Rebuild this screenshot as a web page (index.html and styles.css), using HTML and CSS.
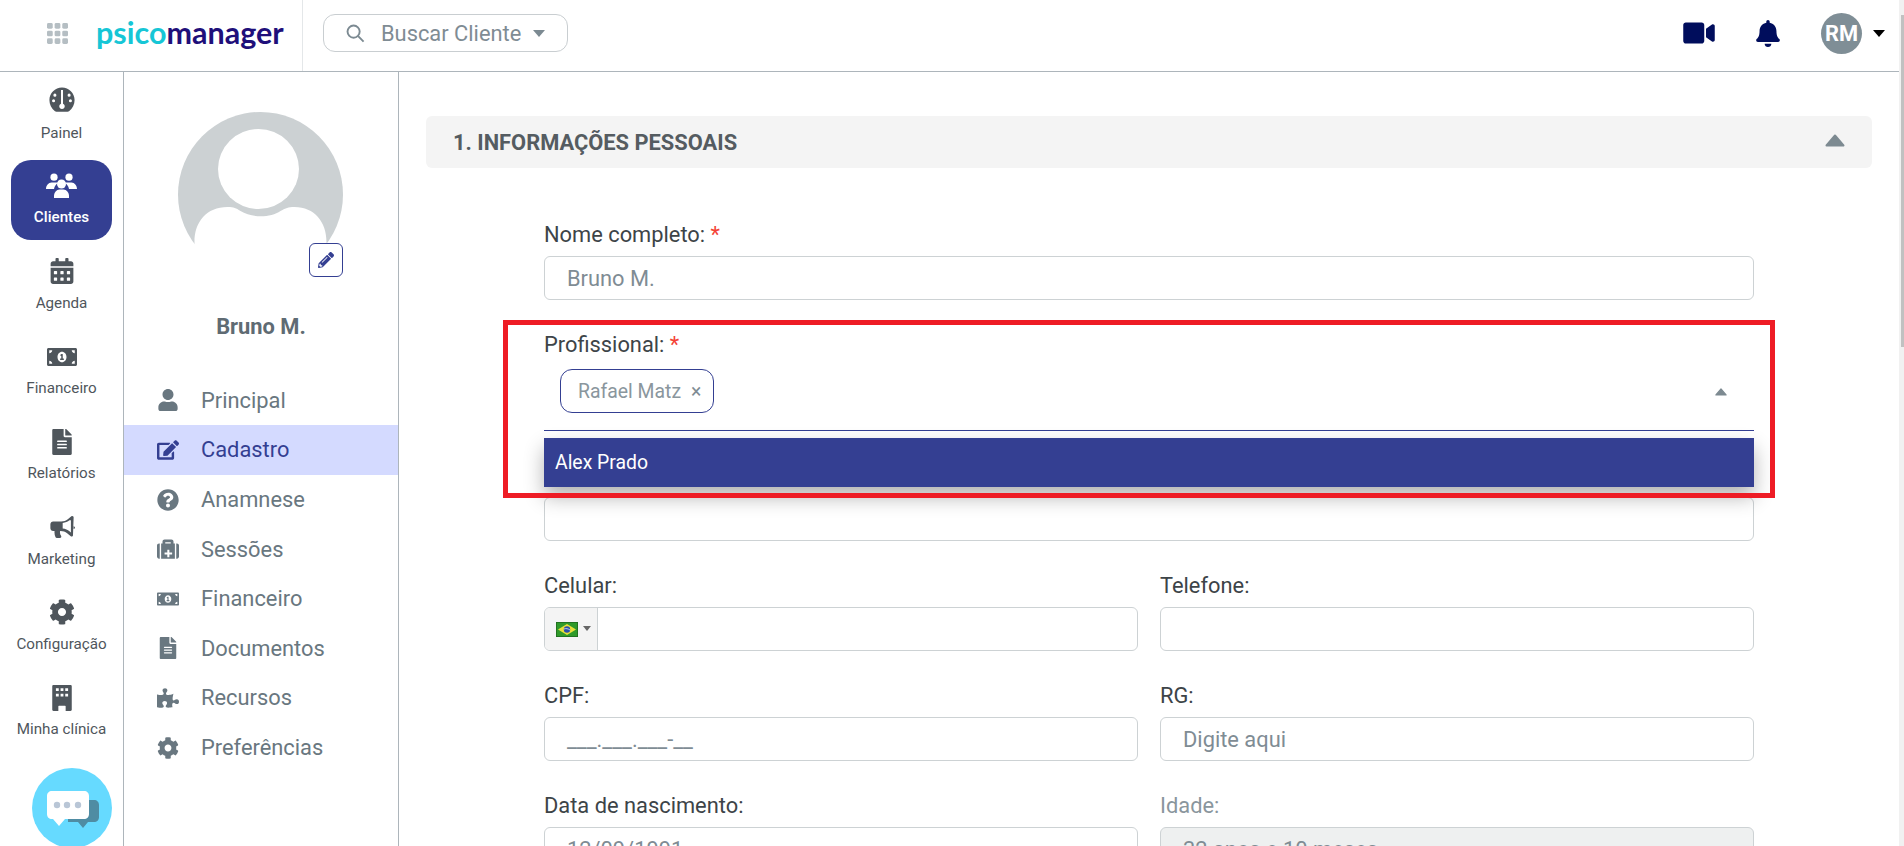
FILE: index.html
```html
<!DOCTYPE html>
<html lang="pt-BR">
<head>
<meta charset="utf-8">
<title>PsicoManager</title>
<link rel="stylesheet" href="styles.css">
</head>
<body>
<svg class="defs" width="0" height="0" aria-hidden="true">
  <symbol id="i-users" viewBox="0 0 31 25"><circle cx="8" cy="4.2" r="3.6"/><circle cx="23" cy="4.2" r="3.6"/><circle cx="15.5" cy="11" r="4.5"/><path d="M0 16c0-3.5 2.500-6.500 5.500-6.500h5c1 0 1.500.2 1.500.5-2 1.200-3.500 3.200-4 6z"/><path d="M31 16c0-3.500-2.500-6.500-5.500-6.500h-5c-1 0-1.500.2-1.500.5 2 1.200 3.500 3.200 4 6z"/><path d="M8 25v-2c0-3.500 2.500-6.500 5.500-6.500h4c3 0 5.500 3 5.500 6.500v2z"/></symbol>
  <symbol id="i-gauge" viewBox="0 0 512 512"><path fill-rule="evenodd" d="M256 8C119 8 8 119 8 256c0 90 40 170 110 222 8 6 18 10 28 10h220c10 0 20-4 28-10 70-52 110-132 110-222C504 119 393 8 256 8zM116 130a30 30 0 1 1 0 60 30 30 0 0 1 0-60zM396 130a30 30 0 1 1 0 60 30 30 0 0 1 0-60zM90 240a30 30 0 1 1 0 60 30 30 0 0 1 0-60zM422 240a30 30 0 1 1 0 60 30 30 0 0 1 0-60zM236 60h40v270a54 54 0 1 1-40 0z"/></symbol>
  <symbol id="i-calendar" viewBox="0 0 448 512"><path d="M0 464c0 26.5 21.5 48 48 48h352c26.5 0 48-21.5 48-48V192H0v272zm320-196c0-6.6 5.4-12 12-12h40c6.6 0 12 5.4 12 12v40c0 6.6-5.4 12-12 12h-40c-6.6 0-12-5.4-12-12v-40zm0 128c0-6.6 5.4-12 12-12h40c6.6 0 12 5.4 12 12v40c0 6.6-5.4 12-12 12h-40c-6.6 0-12-5.4-12-12v-40zM192 268c0-6.6 5.4-12 12-12h40c6.6 0 12 5.4 12 12v40c0 6.6-5.4 12-12 12h-40c-6.6 0-12-5.4-12-12v-40zm0 128c0-6.6 5.4-12 12-12h40c6.6 0 12 5.4 12 12v40c0 6.6-5.4 12-12 12h-40c-6.6 0-12-5.4-12-12v-40zM64 268c0-6.6 5.4-12 12-12h40c6.6 0 12 5.4 12 12v40c0 6.6-5.4 12-12 12H76c-6.6 0-12-5.4-12-12v-40zm0 128c0-6.6 5.4-12 12-12h40c6.6 0 12 5.4 12 12v40c0 6.6-5.4 12-12 12H76c-6.6 0-12-5.4-12-12v-40zM400 64h-48V16c0-8.8-7.2-16-16-16h-32c-8.8 0-16 7.2-16 16v48H160V16c0-8.8-7.2-16-16-16h-32c-8.8 0-16 7.2-16 16v48H48C21.5 64 0 85.5 0 112v48h448v-48c0-26.5-21.5-48-48-48z"/></symbol>
  <symbol id="i-money" viewBox="0 0 640 512"><path fill-rule="evenodd" d="M352 288h-16v-88c0-4.42-3.58-8-8-8h-13.58c-4.74 0-9.37 1.4-13.31 4.03l-15.33 10.22a7.994 7.994 0 0 0-2.22 11.09l8.88 13.31a7.994 7.994 0 0 0 11.09 2.22l.47-.31V288h-16c-4.42 0-8 3.58-8 8v16c0 4.42 3.58 8 8 8h64c4.42 0 8-3.58 8-8v-16c0-4.42-3.58-8-8-8zM608 64H32C14.33 64 0 78.33 0 96v320c0 17.67 14.33 32 32 32h576c17.67 0 32-14.33 32-32V96c0-17.67-14.33-32-32-32zM48 400v-64c35.35 0 64 28.65 64 64H48zm0-224v-64h64c0 35.35-28.65 64-64 64zm272 192c-53 0-96-50.15-96-112 0-61.86 43-112 96-112s96 50.14 96 112c0 61.87-43.02 112-96 112zm272 32h-64c0-35.35 28.65-64 64-64v64zm0-224c-35.35 0-64-28.65-64-64h64v64z"/></symbol>
  <symbol id="i-file" viewBox="0 0 384 512"><path d="M224 136V0H24C10.7 0 0 10.7 0 24v464c0 13.3 10.7 24 24 24h336c13.3 0 24-10.7 24-24V160H248c-13.2 0-24-10.8-24-24zm64 236c0 6.6-5.4 12-12 12H108c-6.6 0-12-5.4-12-12v-8c0-6.6 5.4-12 12-12h168c6.6 0 12 5.4 12 12v8zm0-64c0 6.6-5.4 12-12 12H108c-6.6 0-12-5.4-12-12v-8c0-6.6 5.4-12 12-12h168c6.6 0 12 5.4 12 12v8zm0-72v8c0 6.6-5.4 12-12 12H108c-6.6 0-12-5.4-12-12v-8c0-6.6 5.4-12 12-12h168c6.6 0 12 5.4 12 12zm96-114.1v6.1H256V0h6.1c6.4 0 12.5 2.5 17 7l97.9 98c4.5 4.5 7 10.6 7 16.9z"/></symbol>
  <symbol id="i-horn" viewBox="0 0 608 512"><path fill-rule="evenodd" d="M576 240c17.7 9 32 19 32 32s-14 24-32 32zM576 32c0-9-7-32-32-32-7 0-14 2-20 7l-85 68c-43 34-96 53-151 53H96c-35 0-64 29-64 64v96c0 35 29 64 64 64h34c-2 10-2 21-2 32 0 40 9 77 25 111 6 11 17 17 29 17h74c26 0 42-30 26-51-16-21-26-48-26-77 0-11 2-22 5-32h12c55 0 108 19 151 53l85 68c6 5 13 7 20 7 25 0 32-23 32-32zM512 98v284l-33-26c-42-34-94-56-159-64V160c65-8 117-30 159-62z"/></symbol>
  <symbol id="i-cog" viewBox="0 0 512 512"><path d="M487.4 315.7l-42.6-24.6c4.3-23.2 4.3-47 0-70.2l42.6-24.6c4.9-2.8 7.1-8.6 5.5-14-11.1-35.6-30-67.8-54.7-94.6-3.8-4.1-10-5.1-14.8-2.3L380.8 110c-17.9-15.4-38.5-27.3-60.8-35.1V25.8c0-5.6-3.9-10.5-9.4-11.7-36.7-8.2-74.3-7.8-109.2 0-5.5 1.2-9.4 6.1-9.4 11.7V75c-22.2 7.9-42.8 19.8-60.8 35.1L88.7 85.5c-4.9-2.8-11-1.9-14.8 2.3-24.7 26.7-43.6 58.9-54.7 94.6-1.7 5.4.6 11.2 5.5 14L67.3 221c-4.3 23.2-4.3 47 0 70.2l-42.6 24.6c-4.9 2.8-7.1 8.6-5.5 14 11.1 35.6 30 67.8 54.7 94.6 3.8 4.1 10 5.1 14.8 2.3l42.6-24.6c17.9 15.4 38.5 27.3 60.8 35.1v49.2c0 5.6 3.9 10.5 9.4 11.7 36.7 8.2 74.3 7.8 109.2 0 5.5-1.2 9.4-6.1 9.4-11.7v-49.2c22.2-7.9 42.8-19.8 60.8-35.1l42.6 24.6c4.9 2.8 11 1.9 14.8-2.3 24.7-26.7 43.6-58.9 54.7-94.6 1.5-5.5-.7-11.3-5.6-14.1zM256 336c-44.1 0-80-35.9-80-80s35.9-80 80-80 80 35.9 80 80-35.9 80-80 80z"/></symbol>
  <symbol id="i-building" viewBox="0 0 448 512"><path fill-rule="evenodd" d="M56 0h336c13 0 24 11 24 24v464c0 13-11 24-24 24H296v-92c0-7-5-12-12-12h-120c-7 0-12 5-12 12v92H56c-13 0-24-11-24-24V24C32 11 43 0 56 0zM104 64v56h56V64zM196 64v56h56V64zM288 64v56h56V64zM104 172v56h56v-56zM196 172v56h56v-56zM288 172v56h56v-56z"/></symbol>
  <symbol id="i-user" viewBox="0 0 448 512"><path d="M224 256c70.7 0 128-57.3 128-128S294.7 0 224 0 96 57.3 96 128s57.3 128 128 128zm89.6 32h-16.7c-22.2 10.2-46.9 16-72.9 16s-50.6-5.8-72.9-16h-16.7C60.2 288 0 348.2 0 422.4V464c0 26.5 21.5 48 48 48h352c26.5 0 48-21.5 48-48v-41.6c0-74.2-60.2-134.4-134.4-134.4z"/></symbol>
  <symbol id="i-edit" viewBox="0 0 576 512"><path d="M402.6 83.2l90.2 90.2c3.8 3.8 3.8 10 0 13.8L274.4 405.6l-92.8 10.3c-12.4 1.4-22.9-9.1-21.5-21.5l10.3-92.8L388.8 83.2c3.8-3.8 10-3.8 13.8 0zm162-22.9l-48.8-48.8c-15.2-15.2-39.9-15.2-55.2 0l-35.4 35.4c-3.8 3.8-3.8 10 0 13.8l90.2 90.2c3.8 3.8 10 3.8 13.8 0l35.4-35.4c15.2-15.3 15.2-40 0-55.2zM384 346.2V448H64V128h229.8c3.2 0 6.2-1.3 8.5-3.5l40-40c7.6-7.6 2.2-20.5-8.5-20.5H48C21.5 64 0 85.5 0 112v352c0 26.5 21.5 48 48 48h352c26.5 0 48-21.5 48-48V306.2c0-10.7-12.9-16-20.5-8.5l-40 40c-2.2 2.3-3.5 5.3-3.5 8.5z"/></symbol>
  <symbol id="i-question" viewBox="0 0 512 512"><path d="M504 256c0 136.997-111.043 248-248 248S8 392.997 8 256C8 119.083 119.043 8 256 8s248 111.083 248 248zM262.655 90c-54.497 0-89.255 22.957-116.549 63.758-3.536 5.286-2.353 12.415 2.715 16.258l34.699 26.31c5.205 3.947 12.621 3.008 16.665-2.122 17.864-22.658 30.113-35.797 57.303-35.797 20.429 0 45.698 13.148 45.698 32.958 0 14.976-12.363 22.667-32.534 33.976C247.128 238.528 216 254.941 216 296v4c0 6.627 5.373 12 12 12h56c6.627 0 12-5.373 12-12v-1.333c0-28.462 83.186-29.647 83.186-106.667 0-58.002-60.165-102-116.531-102zM256 338c-25.365 0-46 20.635-46 46 0 25.364 20.635 46 46 46s46-20.636 46-46c0-25.365-20.635-46-46-46z"/></symbol>
  <symbol id="i-medkit" viewBox="0 0 512 512"><path d="M96 480h320V128h-32V80c0-26.51-21.49-48-48-48H176c-26.51 0-48 21.49-48 48v48H96v352zm96-384h128v32H192V96zm160 248v32c0 4.418-3.582 8-8 8h-56v56c0 4.418-3.582 8-8 8h-32c-4.418 0-8-3.582-8-8v-56h-56c-4.418 0-8-3.582-8-8v-32c0-4.418 3.582-8 8-8h56v-56c0-4.418 3.582-8 8-8h32c4.418 0 8 3.582 8 8v56h56c4.418 0 8 3.582 8 8zM512 176v256c0 26.51-21.49 48-48 48h-16V128h16c26.51 0 48 21.49 48 48zM64 480H48c-26.51 0-48-21.49-48-48V176c0-26.51 21.49-48 48-48h16v352z"/></symbol>
  <symbol id="i-puzzle" viewBox="0 0 576 512"><path d="M519.442 288.651c-41.519 0-59.5 31.593-82.058 31.593C377.409 320.244 432 144 432 144s-196.288 80-196.288-3.297c0-35.827 36.288-46.25 36.288-85.985C272 19.216 243.885 0 210.539 0c-34.654 0-66.366 18.891-66.366 56.346 0 41.364 31.711 59.277 31.711 81.75C175.885 207.719 0 166.758 0 166.758v333.237s178.635 41.047 178.635-28.662c0-22.473-40-40.107-40-81.471 0-37.456 29.25-56.346 63.577-56.346 33.673 0 61.788 19.216 61.788 54.717 0 39.735-36.288 50.158-36.288 85.985 0 60.803 129.675 25.73 181.23 25.73 0 0-34.725-120.101 25.827-120.101 35.962 0 46.423 36.152 86.308 36.152C556.712 416 576 387.99 576 354.443c0-34.199-18.962-65.792-56.558-65.792z"/></symbol>
  <symbol id="i-pencil" viewBox="0 0 512 512"><path d="M497.9 142.1l-46.1 46.1c-4.7 4.7-12.3 4.7-17 0l-111-111c-4.7-4.7-4.7-12.3 0-17l46.1-46.1c18.7-18.7 49.1-18.7 67.9 0l60.1 60.1c18.8 18.7 18.8 49.1 0 67.9zM284.2 99.8L21.6 362.4.4 483.9c-2.9 16.4 11.4 30.6 27.8 27.8l121.5-21.3 262.6-262.6c4.7-4.7 4.7-12.3 0-17l-111-111c-4.8-4.7-12.4-4.7-17.1 0zM124.1 339.9c-5.5-5.5-5.5-14.3 0-19.8l154-154c5.5-5.5 14.3-5.5 19.8 0s5.5 14.3 0 19.8l-154 154c-5.5 5.5-14.3 5.5-19.8 0zM88 424h48v36.3l-64.5 11.3-31.1-31.1L51.7 376H88v48z"/></symbol>
  <symbol id="i-video" viewBox="0 0 576 512"><path d="M336.2 64H47.8C21.4 64 0 85.4 0 111.8v288.4C0 426.6 21.4 448 47.8 448h288.4c26.4 0 47.8-21.4 47.8-47.8V111.8c0-26.4-21.4-47.8-47.8-47.8zm189.4 37.7L416 177.3v157.4l109.6 75.5c21.2 14.6 50.4-.3 50.4-25.8V127.5c0-25.4-29.1-40.4-50.4-25.8z"/></symbol>
  <symbol id="i-bell" viewBox="0 0 448 512"><path d="M224 512c35.32 0 63.97-28.65 63.97-64H160.03c0 35.35 28.65 64 63.97 64zm215.39-149.71c-19.32-20.76-55.47-51.99-55.47-154.29 0-77.7-54.48-139.9-127.94-155.16V32c0-17.67-14.32-32-31.98-32s-31.98 14.33-31.98 32v20.84C118.56 68.1 64.08 130.3 64.08 208c0 102.3-36.15 133.53-55.47 154.29-6 6.45-8.66 14.16-8.61 21.71.11 16.4 12.98 32 32.1 32h383.8c19.12 0 32-15.6 32.1-32 .05-7.55-2.61-15.27-8.61-21.71z"/></symbol>
  <symbol id="i-caret-up" viewBox="0 0 20 13"><path d="M10 1.5 18.500 11.500H1.500z" stroke="currentColor" stroke-width="2" stroke-linejoin="round"/></symbol>
</svg>

<div class="window">
  <div class="page">
    <header class="topbar">
      <div class="brand">
        <svg class="apps" viewBox="0 0 22 22"><g><rect x="0" y="0" width="6" height="6" rx="1.5"/><rect x="8" y="0" width="6" height="6" rx="1.5"/><rect x="16" y="0" width="6" height="6" rx="1.5"/><rect x="0" y="8" width="6" height="6" rx="1.5"/><rect x="8" y="8" width="6" height="6" rx="1.5"/><rect x="16" y="8" width="6" height="6" rx="1.5"/><rect x="0" y="16" width="6" height="6" rx="1.5"/><rect x="8" y="16" width="6" height="6" rx="1.5"/><rect x="16" y="16" width="6" height="6" rx="1.5"/></g></svg>
        <div class="logo"><span class="logo-a">psico</span><span class="logo-b">manager</span></div>
      </div>
      <div class="search">
        <svg class="search-icon" viewBox="0 0 20 20"><circle cx="8" cy="8" r="6.4"/><path d="M12.8 12.8 18.5 18.5"/></svg>
        <span class="search-text">Buscar Cliente</span>
        <span class="search-caret"></span>
      </div>
      <div class="actions">
        <svg class="act-video"><use href="#i-video"/></svg>
        <svg class="act-bell"><use href="#i-bell"/></svg>
        <div class="me">RM</div>
        <span class="me-caret"></span>
      </div>
    </header>

    <div class="body">
      <nav class="rail">
        <a class="rail-item first"><svg class="ri ri-gauge"><use href="#i-gauge"/></svg><span>Painel</span></a>
        <a class="rail-item active"><svg class="ri ri-users"><use href="#i-users"/></svg><span>Clientes</span></a>
        <a class="rail-item"><svg class="ri"><use href="#i-calendar"/></svg><span>Agenda</span></a>
        <a class="rail-item"><svg class="ri ri-wide"><use href="#i-money"/></svg><span>Financeiro</span></a>
        <a class="rail-item"><svg class="ri"><use href="#i-file"/></svg><span>Relatórios</span></a>
        <a class="rail-item"><svg class="ri"><use href="#i-horn"/></svg><span>Marketing</span></a>
        <a class="rail-item"><svg class="ri"><use href="#i-cog"/></svg><span>Configuração</span></a>
        <a class="rail-item"><svg class="ri"><use href="#i-building"/></svg><span>Minha clínica</span></a>
        <div class="chat">
          <svg viewBox="0 0 80 80" class="chat-svg">
            <path class="chat-back" d="M36 32h26c3 0 5 2 5 5v12c0 3-2 5-5 5h-6l-5 6-5-6H36z"/>
            <path class="chat-front" d="M20 23h32c3 0 5 2 5 5v18c0 3-2 5-5 5H33l-6 7-6-7h-1c-3 0-5-2-5-5V28c0-3 2-5 5-5z"/>
            <circle class="chat-dot" cx="25" cy="37" r="3.2"/><circle class="chat-dot" cx="35" cy="37" r="3.2"/><circle class="chat-dot" cx="46" cy="37" r="3.2"/>
          </svg>
        </div>
      </nav>

      <aside class="subnav">
        <div class="avatar-wrap">
          <svg class="avatar" viewBox="0 0 165 165">
            <circle class="av-bg" cx="82.5" cy="82.5" r="82.5"/>
            <ellipse class="av-fg" cx="80.5" cy="57" rx="40.5" ry="40"/>
            <path class="av-fg" d="M16.5 130c0-20 12-35 33-35 7 0 8 1 13 4 11 7 30 7 40 0 6-3 7-4 14-4 20 0 32 15 32 35v8a82.5 82.5 0 0 1-132 0z"/>
          </svg>
          <div class="av-edit"><svg><use href="#i-pencil"/></svg></div>
        </div>
        <div class="client-name">Bruno M.</div>
        <ul class="subnav-list">
          <li class="sn-item"><svg><use href="#i-user"/></svg><span>Principal</span></li>
          <li class="sn-item current"><svg><use href="#i-edit"/></svg><span>Cadastro</span></li>
          <li class="sn-item"><svg><use href="#i-question"/></svg><span>Anamnese</span></li>
          <li class="sn-item"><svg><use href="#i-medkit"/></svg><span>Sessões</span></li>
          <li class="sn-item"><svg><use href="#i-money"/></svg><span>Financeiro</span></li>
          <li class="sn-item"><svg><use href="#i-file"/></svg><span>Documentos</span></li>
          <li class="sn-item"><svg><use href="#i-puzzle"/></svg><span>Recursos</span></li>
          <li class="sn-item"><svg><use href="#i-cog"/></svg><span>Preferências</span></li>
        </ul>
      </aside>

      <main class="content">
        <div class="section-head">
          <h2>1. INFORMAÇÕES PESSOAIS</h2>
          <svg class="section-caret"><use href="#i-caret-up"/></svg>
        </div>
        <form class="form">
          <div class="field">
            <label class="lbl">Nome completo: <i>*</i></label>
            <div class="input">Bruno M.</div>
          </div>
          <div class="field select-field">
            <label class="lbl">Profissional: <i>*</i></label>
            <div class="select">
              <div class="chip"><span>Rafael Matz</span><b>×</b></div>
              <svg class="select-caret"><use href="#i-caret-up"/></svg>
            </div>
            <div class="dropdown">Alex Prado</div>
            <div class="annotation"></div>
          </div>
          <div class="field">
            <label class="lbl">&nbsp;</label>
            <div class="input input-patched"><span class="patch"></span></div>
          </div>
          <div class="grid">
            <div class="field">
              <label class="lbl">Celular:</label>
              <div class="input phone">
                <div class="flag-box">
                  <svg class="flag" viewBox="0 0 22 15"><rect width="22" height="15" fill="#1f6a1f"/><rect x=".8" y=".8" width="20.4" height="13.4" fill="#2f9a2a"/><path d="M11 2 20 7.5 11 13 2 7.5z" fill="#e8df3a"/><circle cx="11" cy="7.5" r="3.2" fill="#2a4fa8"/><path d="M8 7c2-.8 4-.4 6 1" stroke="#fff" stroke-width=".7" fill="none"/></svg>
                  <span class="flag-caret"></span>
                </div>
              </div>
            </div>
            <div class="field">
              <label class="lbl">Telefone:</label>
              <div class="input"></div>
            </div>
            <div class="field">
              <label class="lbl">CPF:</label>
              <div class="input">___.___.___-__</div>
            </div>
            <div class="field">
              <label class="lbl">RG:</label>
              <div class="input">Digite aqui</div>
            </div>
            <div class="field">
              <label class="lbl">Data de nascimento:</label>
              <div class="input">12/09/1991</div>
            </div>
            <div class="field">
              <label class="lbl muted">Idade:</label>
              <div class="input disabled">32 anos e 10 meses</div>
            </div>
          </div>
        </form>
      </main>
    </div>
  </div>
  <div class="scrollbar"><div class="thumb"></div></div>
</div>
</body>
</html>
```

FILE: styles.css
```css
* { box-sizing: border-box; }
html, body { margin: 0; height: 100%; overflow: hidden; }
body { font-family: Roboto, "Liberation Sans", sans-serif; color: #3d4448; background: #fff; }
.defs { position: absolute; }
svg { display: block; fill: currentColor; }

.window { display: flex; height: 846px; overflow: hidden; }
.page { flex: 1; min-width: 0; display: flex; flex-direction: column; }
.scrollbar { width: 5px; background: #f1f1f1; padding-top: 15px; display: flex; justify-content: flex-end; }
.thumb { width: 3px; height: 332px; background: #c1c1c1; }

.topbar { height: 72px; flex: none; display: flex; align-items: center; border-bottom: 1px solid #adb5bb; }
.brand { width: 303px; height: 71px; flex: none; display: flex; align-items: center; border-right: 1px solid #e4e7e9; padding: 0 0 5px 47px; }
.apps { width: 21px; height: 21px; fill: #b5bec3; flex: none; }
.logo { margin: -2px 0 0 28px; font-family: Lato, sans-serif; font-weight: 700; font-size: 30.5px; line-height: 1; }
.logo-a { color: #16c6d6; }
.logo-b { color: #1f0f7a; }
.search { margin: 0 0 5px 20px; width: 245px; height: 38px; border: 1px solid #c9ced1; border-radius: 12px; display: flex; align-items: center; padding-left: 22px; }
.search-icon { width: 19px; height: 19px; fill: none; stroke: #7c8a92; stroke-width: 2; flex: none; }
.search-text { margin-left: 16px; font-size: 21.85px; color: #7f8c94; white-space: nowrap; }
.search-caret { margin-left: 12px; border: 6px solid transparent; border-top: 7px solid #7c8a92; border-bottom: 0; }
.actions { margin-left: auto; display: flex; align-items: center; padding: 0 14px 5px 0; }
.act-video { width: 32px; height: 28px; color: #000d5c; }
.act-bell { width: 24px; height: 27px; color: #000d5c; margin-left: 41px; }
.me { margin-left: 41px; width: 41px; height: 41px; border-radius: 50%; background: #7f8e96; color: #fff; font-weight: 700; font-size: 21.85px; display: flex; align-items: center; justify-content: center; }
.me-caret { margin-left: 11px; border: 6px solid transparent; border-top: 7px solid #000; border-bottom: 0; }

.body { flex: 1; display: flex; min-height: 0; }
.rail { position: relative; width: 124px; flex: none; border-right: 1px solid #adb5bb; padding: 0 11px; display: flex; flex-direction: column; }
.rail-item { height: 85.25px; flex: none; display: flex; flex-direction: column; align-items: center; font-size: 15.2px; line-height: 18px; color: #4f565c; padding-top: 13px; gap: 9.7px; white-space: nowrap; }
.rail-item.first { height: 88px; padding-top: 15px; gap: 11px; }
.rail-item.active { background: #343f92; color: #fff; border-radius: 20px; font-weight: 500; height: 80px; margin-bottom: 5.25px; padding-top: 13px; gap: 10px; }
.ri { width: 26px; height: 26px; color: #4f565c; flex: none; }
.rail-item.active .ri { color: #fff; }
.ri-wide { width: 30px; }
.ri-users { width: 31px; height: 25px; }
.chat { position: absolute; left: 32px; top: 696px; width: 80px; height: 80px; border-radius: 50%; background: #66daff; }
.chat-svg { width: 80px; height: 80px; }
.chat-back { fill: #4f8ca3; }
.chat-front { fill: #fff; }
.chat-dot { fill: #b9c6d6; }

.subnav { width: 275px; flex: none; border-right: 1px solid #adb5bb; display: flex; flex-direction: column; }
.avatar-wrap { position: relative; width: 165px; height: 165px; margin: 40px 0 0 54px; flex: none; }
.avatar { width: 165px; height: 165px; }
.av-bg { fill: #ccd1d3; }
.av-fg { fill: #fff; }
.av-edit { position: absolute; right: 0; bottom: 0; width: 34px; height: 34px; background: #fff; border: 1px solid #343f92; border-radius: 6px; display: flex; align-items: center; justify-content: center; color: #343f92; }
.av-edit svg { width: 16px; height: 16px; }
.client-name { margin-top: 38px; text-align: center; font-weight: 700; font-size: 21.85px; color: #5f6b73; line-height: 24px; }
.subnav-list { list-style: none; margin: 36.6px 0 0; padding: 0; }
.sn-item { height: 49.6px; display: flex; align-items: center; padding-left: 33px; gap: 22px; font-size: 21.85px; color: #697780; }
.sn-item svg { width: 22px; height: 22px; flex: none; }
.sn-item.current { background: #d4daff; color: #343f92; }

.content { flex: 1; min-width: 0; padding: 44px 27px 0; overflow: hidden; }
.section-head { height: 52px; background: #f4f4f4; border-radius: 6px; display: flex; align-items: center; justify-content: space-between; padding: 0 27px; }
.section-head h2 { margin: 0; font-size: 21.85px; font-weight: 700; color: #555c61; }
.section-caret { width: 20px; height: 13px; color: #7d8a91; margin-top: -3px; }
.form { padding: 54px 118px 0; }
.field { position: relative; margin-bottom: 32px; }
.grid { display: grid; grid-template-columns: 1fr 1fr; column-gap: 22px; }
.lbl { display: block; height: 24px; line-height: 25px; font-size: 21.85px; margin-bottom: 10px; color: #3d4448; white-space: nowrap; }
.lbl i { color: #f44336; font-style: normal; }
.lbl.muted { color: #8a969d; }
.input { height: 44px; border: 1px solid #cdd2d4; border-radius: 6px; padding: 0 22px; font-size: 21.85px; line-height: 43px; color: #7f8c94; background: #fff; overflow: hidden; white-space: nowrap; }
.input.disabled { background: #eef0f0; }
.input.phone { padding: 0; }
.flag-box { width: 53px; height: 42px; background: #f4f4f4; border-right: 1px solid #cdd2d4; display: flex; align-items: center; padding-left: 11px; gap: 5px; }
.flag { width: 22px; height: 15px; flex: none; }
.flag-caret { border: 4px solid transparent; border-top: 5px solid #666; border-bottom: 0; margin-top: -2px; }
.input-patched { position: relative; }
.patch { position: absolute; left: 15px; top: 9px; width: 304px; height: 12px; background: #fff; }

.select-field { z-index: 2; }
.select { height: 65px; border-bottom: 1px solid #343f92; display: flex; align-items: flex-start; padding: 3px 16px 0; justify-content: space-between; }
.chip { height: 44px; border: 1px solid #343f92; border-radius: 12px; padding: 0 12px 0 17px; display: flex; align-items: center; gap: 10px; font-size: 19.4px; color: #8a969d; background: #fff; }
.chip b { font-weight: 400; font-size: 19.4px; color: #7f8c94; }
.select-caret { width: 12px; height: 8px; margin: 19px 11px 0 0; color: #7d8a91; }
.dropdown { position: absolute; left: 0; right: 0; top: 106px; height: 49px; background: #343f92; color: #fff; font-size: 19.4px; line-height: 49px; padding-left: 11px; box-shadow: 0 10px 20px rgba(0,0,0,.3); }
.annotation { position: absolute; left: -41px; right: -21px; top: -12px; height: 178px; border: 5px solid #ee1c25; pointer-events: none; }
```
